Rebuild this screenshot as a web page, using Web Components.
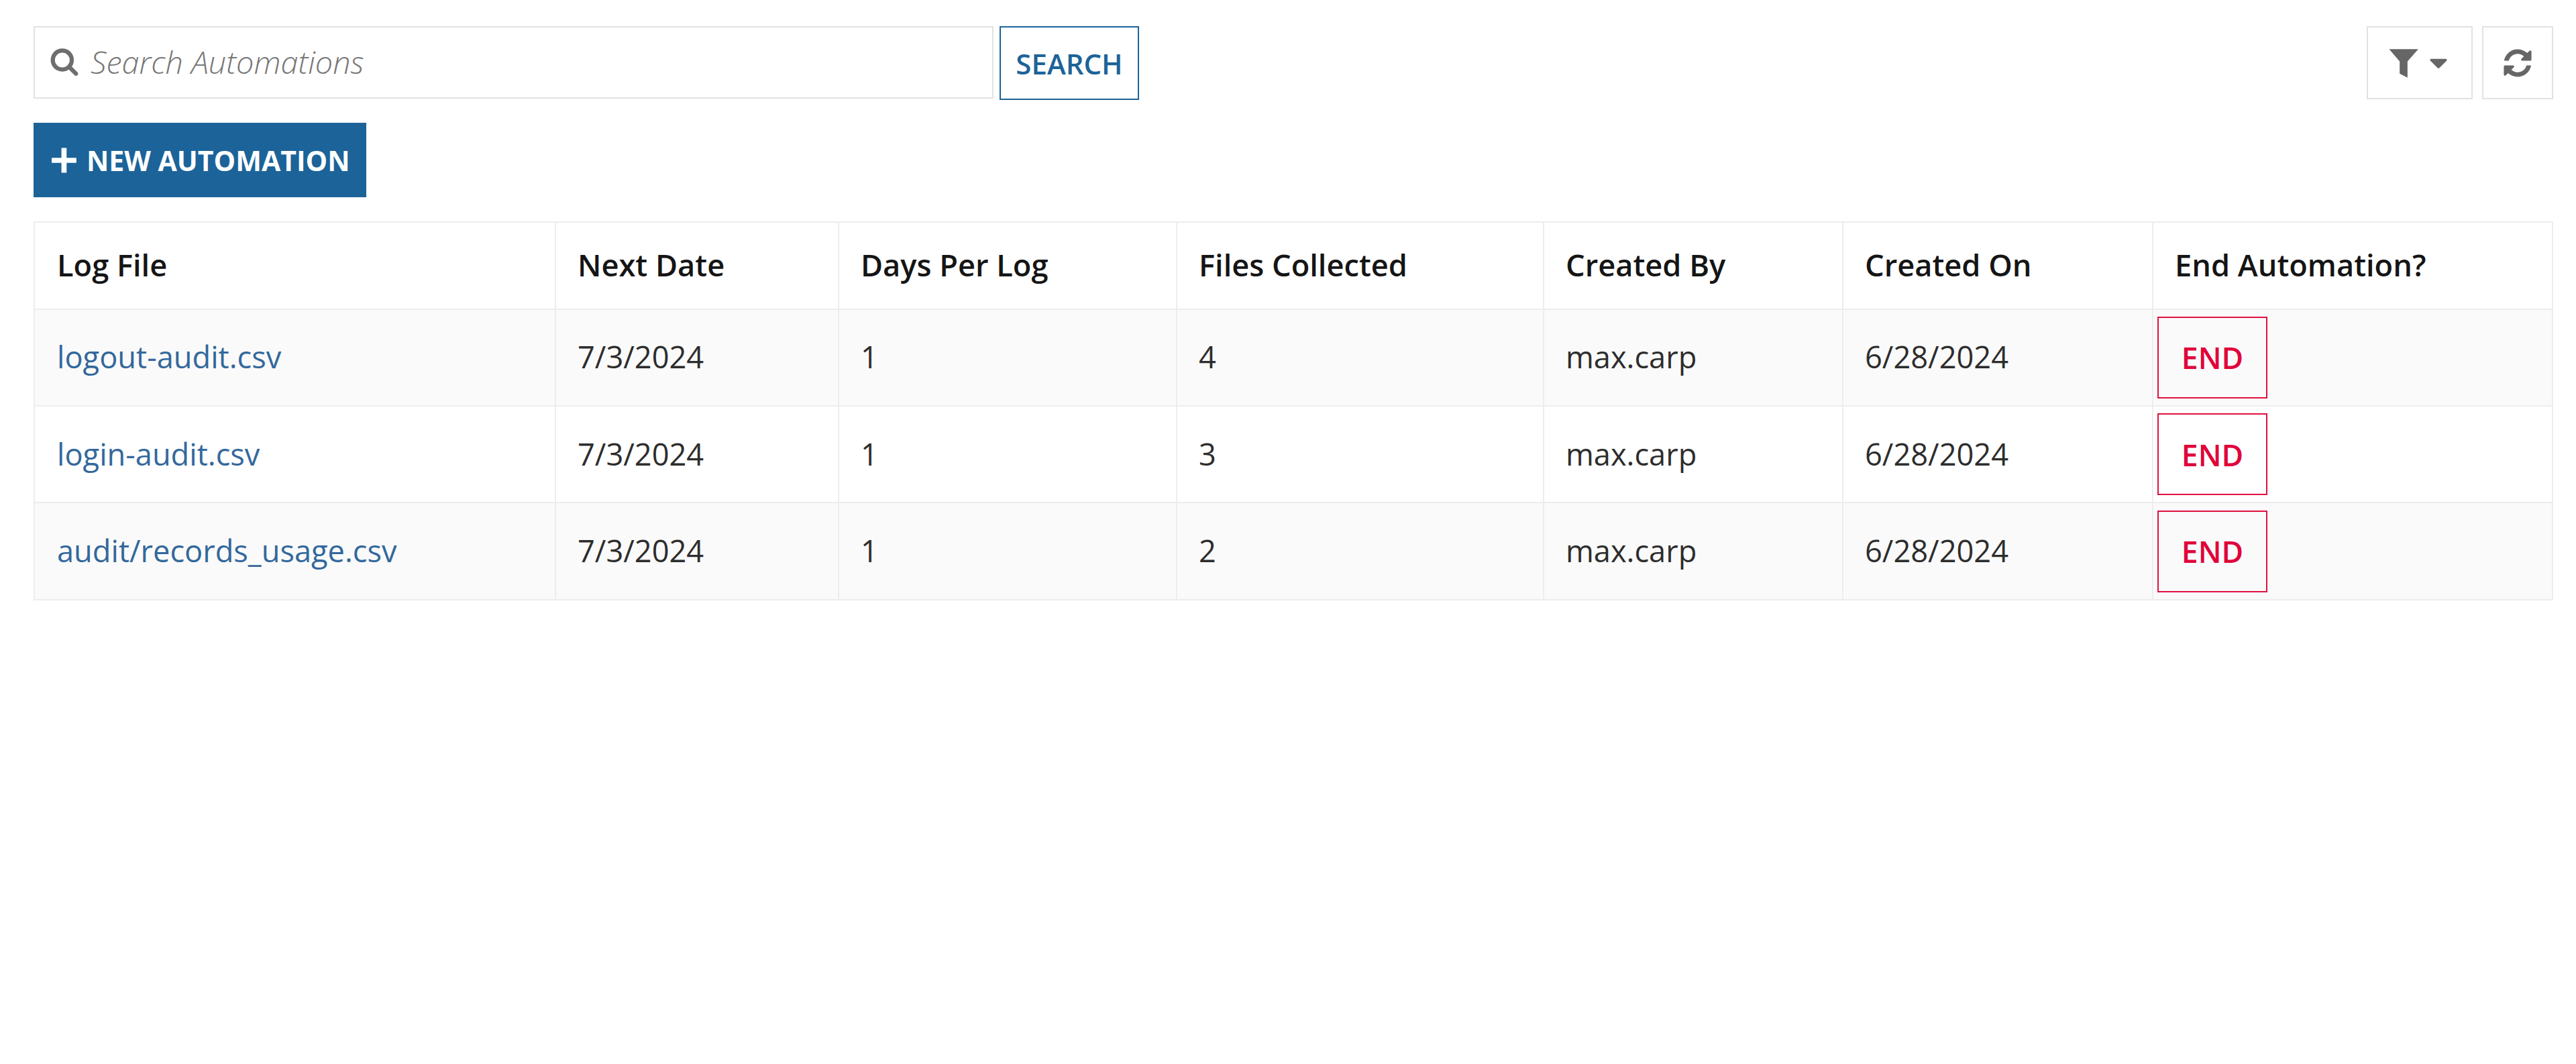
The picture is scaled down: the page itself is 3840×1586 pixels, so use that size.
<!DOCTYPE html>
<html lang="en">
<head>
<meta charset="utf-8">
<title>Automations</title>
<style>
html,body{margin:0;padding:0;background:#fff;}
body{font-family:"Open Sans",sans-serif;font-size:45.2px;color:#2d2d2d;}
</style>
</head>
<body>
<template id="t-app">
<style>
:host{display:block;box-sizing:border-box;padding:39px 34px 0 50px;min-height:1586px;}
.top{display:flex;justify-content:space-between;align-items:flex-start;}
.new{display:block;margin-top:34px;}
.tbl{display:block;margin-top:36px;}
</style>
<div class="top"><slot name="left"></slot><slot name="right"></slot></div>
<div class="new"><slot name="new"></slot></div>
<div class="tbl"><slot></slot></div>
</template>

<template id="t-icon">
<style>
:host{display:inline-flex;flex:none;line-height:0;}
svg{display:block;width:100%;height:100%;fill:currentColor;}
</style>
<svg viewBox="0 0 1792 1792" aria-hidden="true"><path></path></svg>
</template>

<template id="t-search">
<style>
:host{display:flex;align-items:flex-start;gap:9px;}
.box{box-sizing:border-box;width:1431px;height:108px;border:2px solid #e2e2e2;background:#fff;display:flex;align-items:center;padding-left:22px;gap:17px;color:#6e6e6e;}
.ph{font-style:italic;font-weight:300;font-size:46.8px;color:#777;line-height:1;margin-top:-2px;}
.btn{box-sizing:border-box;width:208px;height:110px;border:2px solid #1c6399;color:#1c6399;font-weight:600;font-size:42px;display:flex;align-items:center;justify-content:center;}
x-icon{width:44px;height:44px;margin-top:-4px;}
</style>
<div class="box"><x-icon name="search"></x-icon><span class="ph"><slot></slot></span></div>
<div class="btn"><slot name="action"></slot></div>
</template>

<template id="t-tools">
<style>
:host{display:flex;gap:14px;color:#666;}
.b{box-sizing:border-box;height:109px;border:2px solid #e2e2e2;display:flex;align-items:center;justify-content:center;background:#fff;}
.f{width:158px;}
.r{width:106px;}
.fi{width:50px;height:50px;}
.ca{width:44px;height:44px;margin-left:5px;}
.re{width:48px;height:48px;}
</style>
<div class="b f"><x-icon class="fi" name="filter"></x-icon><x-icon class="ca" name="caret"></x-icon></div>
<div class="b r"><x-icon class="re" name="refresh"></x-icon></div>
</template>

<template id="t-new">
<style>
:host{display:inline-flex;box-sizing:border-box;height:111px;width:496px;align-items:center;padding-left:21px;gap:10px;background:#1c6399;color:#fff;font-weight:700;font-size:41px;}
x-icon{width:48px;height:48px;}
</style>
<x-icon name="plus"></x-icon><slot></slot>
</template>

<template id="t-table">
<style>
:host{display:block;border:solid #ededed;border-width:2px 2px 0 2px;--cols:775px 422px 504px 547px 446px 462px 596px;}
</style>
<slot></slot>
</template>

<template id="t-row">
<style>
:host{display:grid;grid-template-columns:var(--cols);box-sizing:border-box;height:144.4px;border-bottom:2px solid #ededed;}
:host([head]){height:129.6px;font-weight:600;color:#151515;}
:host(:nth-child(even)){background:#fafafa;}
</style>
<slot></slot>
</template>

<template id="t-cell">
<style>
:host{display:flex;align-items:center;box-sizing:border-box;padding:0 0 2px 32px;border-left:2px solid #ededed;min-width:0;white-space:nowrap;}
:host(:first-child){border-left:0;padding-left:33px;}
:host([btn]){padding:0 0 0 6px;}
</style>
<slot></slot>
</template>

<template id="t-link">
<style>:host{display:inline;color:#33689c;}</style><slot></slot>
</template>

<template id="t-end">
<style>
:host{display:flex;box-sizing:border-box;width:164px;height:122px;align-items:center;justify-content:center;border:2px solid #e0103f;color:#e0033a;font-size:44.5px;font-weight:560;}
</style>
<slot></slot>
</template>

<script>
const ICONS={
search:"M1216 832q0-185-131.5-316.5t-316.5-131.5-316.5 131.5-131.5 316.5 131.5 316.5 316.5 131.5 316.5-131.5 131.5-316.5zm512 832q0 52-38 90t-90 38q-54 0-90-38l-343-342q-179 124-399 124-143 0-273.5-55.5t-225-150-150-225-55.5-273.5 55.5-273.5 150-225 225-150 273.5-55.5 273.5 55.5 225 150 150 225 55.5 273.5q0 220-124 399l343 343q37 37 37 90z",
filter:"M125 149H1679L1105 806V1679L687 1463V806Z",
refresh:"M1639 1056q0 5-1 7-64 268-268 434.5t-478 166.5q-146 0-282.5-55t-243.5-157l-129 129q-19 19-45 19t-45-19-19-45v-448q0-26 19-45t45-19h448q26 0 45 19t19 45-19 45l-137 137q71 66 161 102t187 36q134 0 250-65t186-179q11-17 53-117 8-23 30-23h192q13 0 22.5 9.5t9.5 22.5zm25-800v448q0 26-19 45t-45 19h-448q-26 0-45-19t-19-45 19-45l138-138q-148-137-349-137-134 0-250 65t-186 179q-11 17-53 117-8 23-30 23h-199q-13 0-22.5-9.5t-9.5-22.5v-7q65-268 270-434.5t480-166.5q146 0 284 55.5t245 156.5l130-129q19-19 45-19t45 19 19 45z",
caret:"M1408 704q0 26-19 45l-448 448q-19 19-45 19t-45-19l-448-448q-19-19-19-45t19-45 45-19h896q26 0 45 19t19 45z",
plus:"M1600 776v240q0 24-24 24h-520v520q0 24-24 24h-240q-24 0-24-24v-520h-520q-24 0-24-24v-240q0-24 24-24h520v-520q0-24 24-24h240q24 0 24 24v520h520q24 0 24 24z"
};
function def(tag,tid,extra){
  customElements.define(tag,class extends HTMLElement{
    constructor(){super();this.attachShadow({mode:"open"}).appendChild(document.getElementById(tid).content.cloneNode(true));}
    connectedCallback(){if(extra)extra(this);}
  });
}
def("x-icon","t-icon",el=>{el.shadowRoot.querySelector("path").setAttribute("d",ICONS[el.getAttribute("name")]);});
def("x-app","t-app");
def("x-search","t-search");
def("x-tools","t-tools");
def("x-new","t-new");
def("x-table","t-table");
def("x-row","t-row");
def("x-cell","t-cell");
def("x-link","t-link");
def("x-end","t-end");
</script>

<x-app>
  <x-search slot="left">Search Automations<span slot="action">SEARCH</span></x-search>
  <x-tools slot="right"></x-tools>
  <x-new slot="new">NEW AUTOMATION</x-new>
  <x-table>
    <x-row head><x-cell>Log File</x-cell><x-cell>Next Date</x-cell><x-cell>Days Per Log</x-cell><x-cell>Files Collected</x-cell><x-cell>Created By</x-cell><x-cell>Created On</x-cell><x-cell>End Automation?</x-cell></x-row>
    <x-row><x-cell><x-link>logout-audit.csv</x-link></x-cell><x-cell>7/3/2024</x-cell><x-cell>1</x-cell><x-cell>4</x-cell><x-cell>max.carp</x-cell><x-cell>6/28/2024</x-cell><x-cell btn><x-end>END</x-end></x-cell></x-row>
    <x-row><x-cell><x-link>login-audit.csv</x-link></x-cell><x-cell>7/3/2024</x-cell><x-cell>1</x-cell><x-cell>3</x-cell><x-cell>max.carp</x-cell><x-cell>6/28/2024</x-cell><x-cell btn><x-end>END</x-end></x-cell></x-row>
    <x-row><x-cell><x-link>audit/records_usage.csv</x-link></x-cell><x-cell>7/3/2024</x-cell><x-cell>1</x-cell><x-cell>2</x-cell><x-cell>max.carp</x-cell><x-cell>6/28/2024</x-cell><x-cell btn><x-end>END</x-end></x-cell></x-row>
  </x-table>
</x-app>
</body>
</html>
